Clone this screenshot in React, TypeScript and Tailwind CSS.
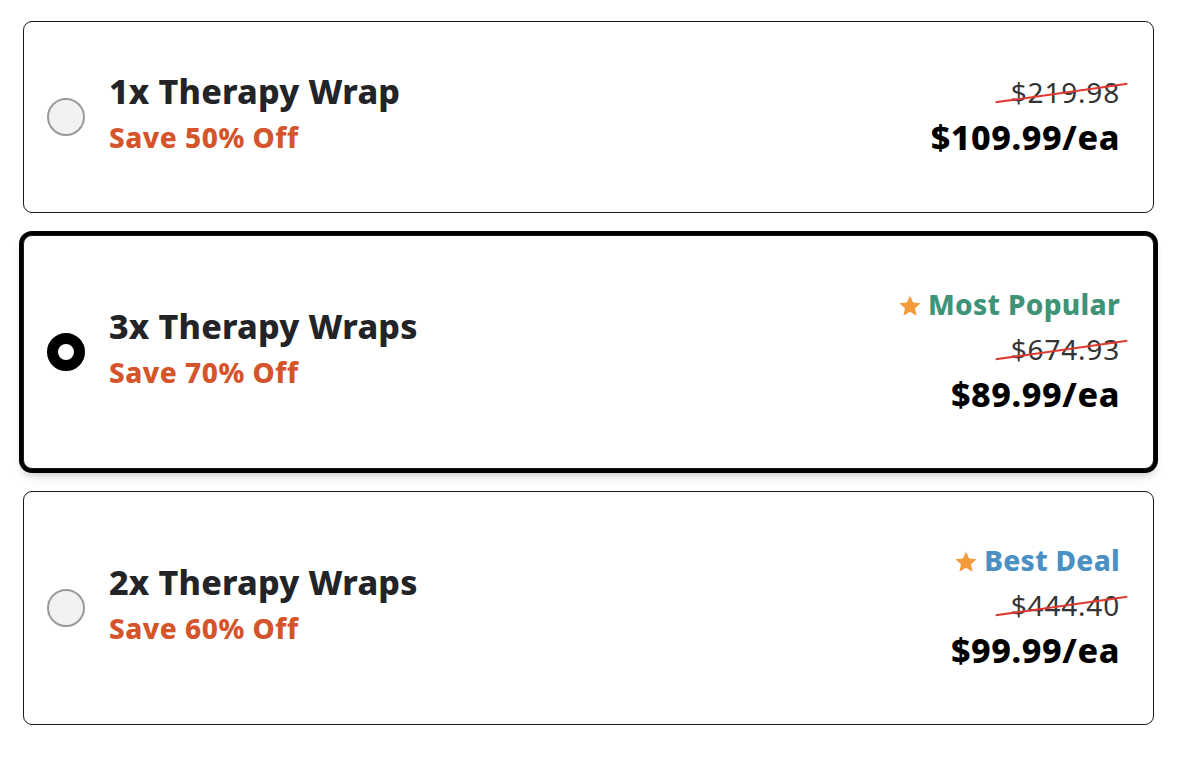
import React, { useState } from "react";

type Option = {
  id: string;
  title: string;
  save: string;
  was: string;
  price: string;
  badge?: { label: string; color: string };
};

const options: Option[] = [
  { id: "1x", title: "1x Therapy Wrap", save: "Save 50% Off", was: "$219.98", price: "$109.99/ea" },
  {
    id: "3x",
    title: "3x Therapy Wraps",
    save: "Save 70% Off",
    was: "$674.93",
    price: "$89.99/ea",
    badge: { label: "Most Popular", color: "text-[#3f9478]" },
  },
  {
    id: "2x",
    title: "2x Therapy Wraps",
    save: "Save 60% Off",
    was: "$444.40",
    price: "$99.99/ea",
    badge: { label: "Best Deal", color: "text-[#4a90c2]" },
  },
];

const Star = () => (
  <svg viewBox="0 0 24 24" className="w-[26px] h-[26px] mr-[5px] mt-[3px]" fill="#f39a3a">
    <path d="M12 2.5l2.9 6.3 6.9.7-5.2 4.6 1.5 6.8L12 17.4l-6.1 3.5 1.5-6.8-5.2-4.6 6.9-.7z" />
  </svg>
);

const App = () => {
  const [selected, setSelected] = useState("3x");

  return (
    <div
      className="pt-[21px] pl-[23px] w-[1200px] min-h-[757px] bg-white"
      style={{ fontFamily: "'Noto Sans', 'Open Sans', sans-serif" }}
    >
      <div className="w-[1131px] flex flex-col gap-[22px]">
        {options.map(o => {
          const active = selected === o.id;
          return (
            <div
              key={o.id}
              onClick={() => setSelected(o.id)}
              className={`flex items-center rounded-[9px] border-[1.5px] border-[#1a1a1a] bg-white pl-[23px] pr-[33px] pb-[6px] cursor-pointer ${
                o.badge ? "h-[234px]" : "h-[192px]"
              } ${active ? "ring-4 ring-black shadow-[0_6px_10px_rgba(0,0,0,0.25)]" : ""}`}
            >
              {active ? (
                <div className="w-[38px] h-[38px] rounded-full border-[11px] border-black bg-white shrink-0 mt-[6px]" />
              ) : (
                <div className="w-[38px] h-[38px] rounded-full border-2 border-[#9a9a9a] bg-[#f2f2f2] shrink-0 mt-[6px]" />
              )}
              <div className="ml-[24px] flex flex-col">
                <div className="text-[34px] leading-[46px] font-extrabold text-[#222427] tracking-[0.2px]">{o.title}</div>
                <div className="text-[28px] leading-[46px] font-extrabold text-[#d4552b] tracking-[0.5px]">{o.save}</div>
              </div>
              <div className="ml-auto flex flex-col items-end">
                {o.badge && (
                  <div className={`flex items-center text-[28px] leading-[45px] font-extrabold tracking-[0.3px] ${o.badge.color}`}>
                    <Star />
                    {o.badge.label}
                  </div>
                )}
                <div className="relative text-[28px] leading-[45px] text-[#333333] tracking-[0.8px]">
                  {o.was}
                  <span className="absolute left-[-16px] right-[-8px] top-[22px] h-[2px] bg-[#e0392f] -rotate-[8deg]" />
                </div>
                <div className="text-[34px] leading-[44px] font-extrabold text-black tracking-[0.6px]">{o.price}</div>
              </div>
            </div>
          );
        })}
      </div>
    </div>
  );
};

export default App;
